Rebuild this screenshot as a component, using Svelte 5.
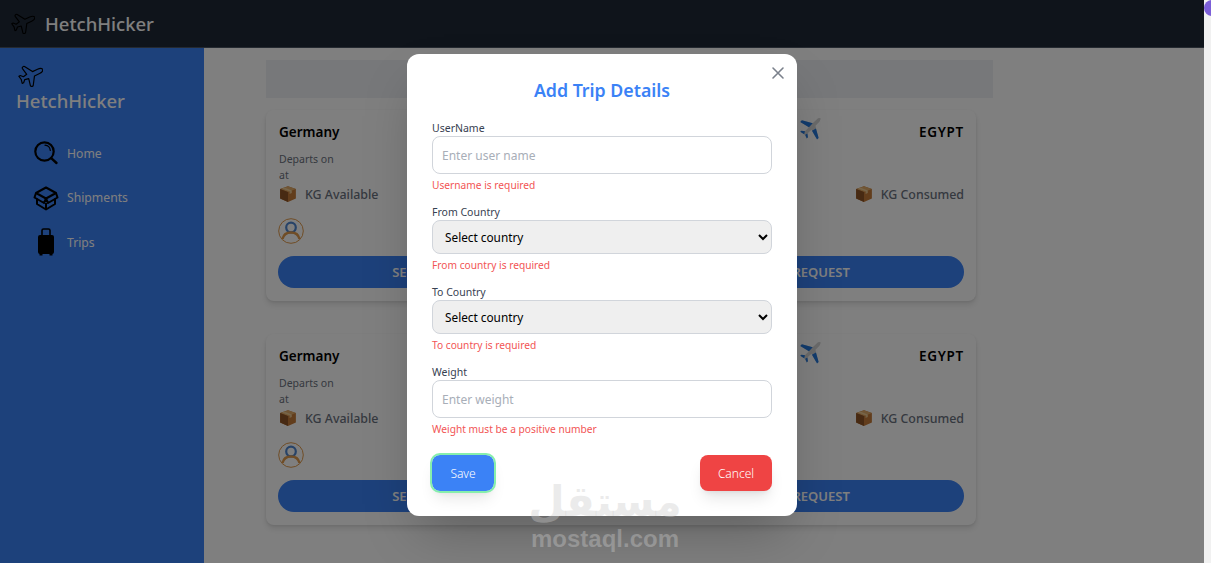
<script>
	const menu = [
		{ label: 'Home', icon: 'search' },
		{ label: 'Shipments', icon: 'box' },
		{ label: 'Trips', icon: 'bag' }
	];
	const planePath =
		'M17.8 19.2 16 11l3.500-3.500C21 6 21.500 4 21 3c-1-.5-3 0-4.500 1.500L13 8 4.800 6.200c-.5-.1-.9.1-1.100.5l-.3.5c-.2.5-.1 1 .3 1.300L9 12l-2 3H4l-1 1 3 2 2 3 1-1v-3l3-2 3.500 5.300c.3.4.8.5 1.300.3l.5-.2c.4-.3.6-.7.5-1.200z';
</script>

{#snippet plane(cls)}
	<svg class={cls} viewBox="0 0 24 24" fill="none" stroke="#000" stroke-width="1.050" stroke-linejoin="round">
		<path d={planePath} transform="rotate(20 12 12) translate(0 -1)" />
	</svg>
{/snippet}

{#snippet parcel()}
	<svg class="parcel" viewBox="0 0 16 16">
		<path d="M8 1 15 3.600V12L8 15 1 12V3.600z" fill="#c47a38" />
		<path d="M8 1 15 3.600 8 6.200 1 3.600z" fill="#e0aa68" />
		<path d="M8 6.200V15L1 12V3.600z" fill="#8f5526" />
		<path d="M4.600 2.300 11.400 4.900V7.200L9.400 8V5.600L2.800 3z" fill="#f0d3a0" opacity=".8" />
	</svg>
{/snippet}

{#snippet card()}
	<article class="card">
		<div class="route">
			<strong>Germany</strong>
			<svg class="jet" viewBox="0 0 24 24">
				<path d="M22 2.500c-1-1-2.600-.6-3.600.4L14.500 6.600 4.500 4 3 5.500l8 4.800-3.600 3.700-3.300-.5L3 14.600l3.600 2.300L9 20.700l1.100-1.100-.5-3.400 3.700-3.600 4.700 8 1.500-1.500-2.500-10 3.700-3.900c1-1 1.300-3.600 1.300-3.600z" fill="#d4d4d4" />
				<path d="M14.500 6.600 4.500 4 3 5.500l8 4.800zM17.500 11.600l2.500 8.600-1.500 1.500-4.700-8zM7.400 14l-3.300-.5L3 14.600l3.600 2.300zM9 20.700l1.100-1.100-.5-3.400-2 1.200z" fill="#2478dc" />
			</svg>
			<strong class="to">EGYPT</strong>
		</div>
		<div class="meta">
			<div class="side">
				<p>Departs on</p>
				<p>at</p>
				<div class="kg">{@render parcel()}<span>KG Available</span></div>
			</div>
			<div class="kg consumed">{@render parcel()}<span>KG Consumed</span></div>
		</div>
		<svg class="avatar" viewBox="0 0 26 26" fill="none">
			<circle cx="13" cy="13" r="12.300" stroke="#e09a4c" stroke-width="1" />
			<circle cx="13" cy="9.500" r="4.800" stroke="#4f86d0" stroke-width="2.200" />
			<path d="M4.500 21c1-4.500 4.500-6.500 8.500-6.500s7.500 2 8.500 6.500" stroke="#e09a4c" stroke-width="2.400" />
		</svg>
		<button class="request" type="button"><span>SEND</span><span>REQUEST</span></button>
	</article>
{/snippet}

<div class="screen">
	<div class="page">
		<header class="topbar">
			{@render plane('top-plane')}
			<span class="brand">HetchHicker</span>
		</header>
		<div class="body">
			<aside class="sidebar">
				{@render plane('side-plane')}
				<div class="brand">HetchHicker</div>
				<nav>
					{#each menu as item}
						<a href="#top" class="nav-item">
							<span class="nav-icon">
								{#if item.icon === 'search'}
									<svg width="26" height="26" viewBox="0 0 26 26" fill="none" stroke="#000" stroke-width="2.200" stroke-linecap="round">
										<circle cx="11.500" cy="11.500" r="9.200" />
										<path d="M18.200 18.200 23.500 23" stroke-width="2.400" />
										<path d="M12 5.200c2.800.2 5 2.400 5.300 5.300" stroke-width="1.200" />
									</svg>
								{:else if item.icon === 'box'}
									<svg width="26" height="26" viewBox="0 0 26 26" fill="none" stroke="#000" stroke-width="2" stroke-linejoin="round">
										<path d="M13 2.500 23 8 13 13.500 3 8z" />
										<path d="M3 8 1.500 12.500 11 18 13 13.500 15 18 24.500 12.500 23 8" />
										<path d="M4 13.500V19L13 24.500 22 19V13.500M13 18V24.500" />
									</svg>
								{:else}
									<svg width="26" height="28" viewBox="0 0 26 28" fill="#000">
										<path d="M9 7V2.500C9 1.500 9.700 1 10.500 1h5c.8 0 1.500.5 1.500 1.500V7" fill="none" stroke="#000" stroke-width="1.600" />
										<rect x="5" y="7" width="16" height="19" rx="2" />
										<rect x="6.500" y="25" width="3" height="2.500" />
										<rect x="16.500" y="25" width="3" height="2.500" />
									</svg>
								{/if}
							</span>
							<span>{item.label}</span>
						</a>
					{/each}
				</nav>
			</aside>
			<main class="content">
				<div class="strip"></div>
				<div class="cards">
					{@render card()}
					{@render card()}
				</div>
			</main>
		</div>

		<div class="overlay">
			<form class="modal" novalidate>
				<button class="close" type="button" aria-label="Close">
					<svg width="14" height="14" viewBox="0 0 14 14" stroke="#7b818c" stroke-width="1.600" stroke-linecap="round">
						<path d="M2 2 12 12M12 2 2 12" />
					</svg>
				</button>
				<h2>Add Trip Details</h2>

				<label class="field first">
					<span>UserName</span>
					<input type="text" placeholder="Enter user name" />
				</label>
				<p class="error">Username is required</p>

				<label class="field">
					<span>From Country</span>
					<select><option>Select country</option></select>
				</label>
				<p class="error">From country is required</p>

				<label class="field">
					<span>To Country</span>
					<select><option>Select country</option></select>
				</label>
				<p class="error">To country is required</p>

				<label class="field">
					<span>Weight</span>
					<input type="text" placeholder="Enter weight" />
				</label>
				<p class="error">Weight must be a positive number</p>

				<div class="actions">
					<button class="save" type="button">Save</button>
					<button class="cancel" type="button">Cancel</button>
				</div>
			</form>
		</div>
	</div>
	<div class="scrollbar"><span class="bubble"></span></div>

	<div class="watermark" aria-hidden="true">
		<span class="ar">مستقل</span>
		<span class="en">mostaql.com</span>
	</div>
</div>

<style>
	:global(body) {
		margin: 0;
		font-family: 'Noto Sans', sans-serif;
	}

	.screen {
		display: flex;
		width: 1211px;
		height: 563px;
		overflow: hidden;
		position: relative;
	}

	.page {
		flex: 1;
		position: relative;
		display: flex;
		flex-direction: column;
		background: #fff;
		min-width: 0;
	}

	.scrollbar {
		width: 7px;
		background: #f1f1f1;
		position: relative;
	}

	.bubble {
		position: absolute;
		left: 0;
		top: 0;
		width: 16px;
		height: 16px;
		border-radius: 50%;
		background: #7c5fd8;
	}

	.topbar {
		height: 48px;
		box-sizing: border-box;
		background: #1f2937;
		display: flex;
		align-items: center;
		padding-left: 9px;
		gap: 10px;
		border-bottom: 1px solid #4b5563;
		flex-shrink: 0;
	}

	.top-plane {
		width: 26px;
		height: 26px;
	}

	.brand {
		font-size: 18.500px;
		font-weight: 500;
		color: #fff;
		line-height: 24px;
	}

	.body {
		flex: 1;
		display: flex;
		min-height: 0;
	}

	.sidebar {
		width: 204px;
		background: #3b82f6;
		box-sizing: border-box;
		padding: 15px 16px;
		flex-shrink: 0;
	}

	.side-plane {
		display: block;
		width: 27px;
		height: 27px;
		margin-bottom: -1px;
	}

	nav {
		display: flex;
		flex-direction: column;
		gap: 18px;
		margin-top: 27px;
		padding-left: 16px;
	}

	.nav-item {
		display: flex;
		align-items: center;
		gap: 8px;
		height: 26.500px;
		color: #fff;
		font-size: 12.200px;
		font-weight: 400;
		text-decoration: none;
	}

	.nav-icon {
		width: 27px;
		display: flex;
		justify-content: center;
	}

	.content {
		flex: 1;
		padding: 12px 0 0 62px;
	}

	.strip {
		width: 727px;
		height: 38px;
		background: #eef1f5;
	}

	.cards {
		display: flex;
		flex-direction: column;
		gap: 33px;
		width: 710px;
		margin-top: 12px;
	}

	.card {
		height: 191px;
		box-sizing: border-box;
		padding: 12px 12px 13px;
		border-radius: 8px;
		background: #fff;
		box-shadow: 0 4px 6px rgba(0, 0, 0, 0.1), 0 1px 3px rgba(0, 0, 0, 0.08);
		display: flex;
		flex-direction: column;
	}

	.route {
		display: grid;
		grid-template-columns: 1fr 24px 142px;
		align-items: center;
		height: 20px;
		font-size: 13.500px;
		color: #000;
	}

	.route strong {
		font-weight: 600;
		padding-left: 1px;
	}

	.route .to {
		text-align: right;
		letter-spacing: 0.7px;
	}

	.jet {
		width: 26px;
		height: 26px;
		margin: -6px 0 0 -1px;
	}

	.meta {
		display: flex;
		justify-content: space-between;
		align-items: flex-end;
		margin-top: 9px;
		padding-left: 1px;
		font-size: 10.500px;
		color: #6b7280;
	}

	.meta p {
		margin: 0;
		line-height: 16px;
	}

	.kg {
		display: flex;
		align-items: center;
		gap: 8px;
		font-size: 12.400px;
		font-weight: 500;
		height: 20px;
		margin-top: 1px;
		color: #6b7280;
	}

	.parcel {
		width: 18px;
		height: 18px;
	}

	.avatar {
		width: 26px;
		height: 26px;
		margin-top: 14px;
	}

	.request {
		margin-top: auto;
		height: 32px;
		border: 0;
		border-radius: 999px;
		background: #3b82f6;
		color: #fff;
		font: 600 13px 'Noto Sans', sans-serif;
		display: flex;
		align-items: center;
		justify-content: center;
		gap: 366px;
	}

	.overlay {
		position: absolute;
		inset: 0;
		background: rgba(0, 0, 0, 0.5);
		display: flex;
		justify-content: center;
		align-items: flex-start;
	}

	.modal {
		width: 390px;
		height: 462px;
		box-sizing: border-box;
		margin-top: 54px;
		padding: 24px 25px;
		background: #fff;
		border-radius: 12px;
		position: relative;
		box-shadow: 0 25px 50px -12px rgba(0, 0, 0, 0.25);
	}

	.close {
		position: absolute;
		top: 12px;
		right: 12px;
		width: 14px;
		height: 14px;
		padding: 0;
		border: 0;
		background: none;
		display: flex;
	}

	h2 {
		margin: 0;
		text-align: center;
		font-size: 17.750px;
		font-weight: 600;
		line-height: 24px;
		color: #3b82f6;
	}

	.field {
		display: block;
		margin-top: 13px;
	}

	.field.first {
		margin-top: 19px;
	}

	.field span {
		display: block;
		font-size: 10.500px;
		line-height: 14px;
		color: #374151;
	}

	input,
	select {
		display: block;
		width: 100%;
		box-sizing: border-box;
		margin-top: 1px;
		border: 1px solid #d1d5db;
		border-radius: 8px;
		font-family: 'Noto Sans', sans-serif;
		font-size: 12px;
	}

	input {
		height: 38px;
		padding: 0 9px;
		background: #fff;
	}

	input::placeholder {
		color: #a8aeb8;
	}

	select {
		height: 34px;
		padding: 0 8px;
		background-color: #efefef;
		color: #000;
		font-size: 11.800px;
	}

	.error {
		margin: 4px 0 0;
		font-size: 10.200px;
		line-height: 14px;
		color: #f25555;
	}

	.actions {
		display: flex;
		justify-content: space-between;
		margin-top: 19px;
	}

	.actions button {
		height: 36px;
		border: 0;
		border-radius: 8px;
		color: #fff;
		font: 300 12px 'Noto Sans', sans-serif;
		box-shadow: 0 10px 15px -3px rgba(0, 0, 0, 0.1), 0 4px 6px -4px rgba(0, 0, 0, 0.1);
	}

	.save {
		width: 62px;
		background: #3b82f6;
		outline: 2px solid #86efac;
	}

	.cancel {
		width: 72px;
		background: #ef4444;
	}

	.watermark {
		position: absolute;
		left: 505px;
		top: 477px;
		width: 200px;
		display: flex;
		flex-direction: column;
		align-items: center;
		color: rgba(204, 204, 204, 0.38);
		pointer-events: none;
	}

	.ar {
		font: 700 42px/50px 'DejaVu Sans', sans-serif;
	}

	.en {
		font: 700 24px/24px 'Liberation Sans', sans-serif;
	}
</style>
